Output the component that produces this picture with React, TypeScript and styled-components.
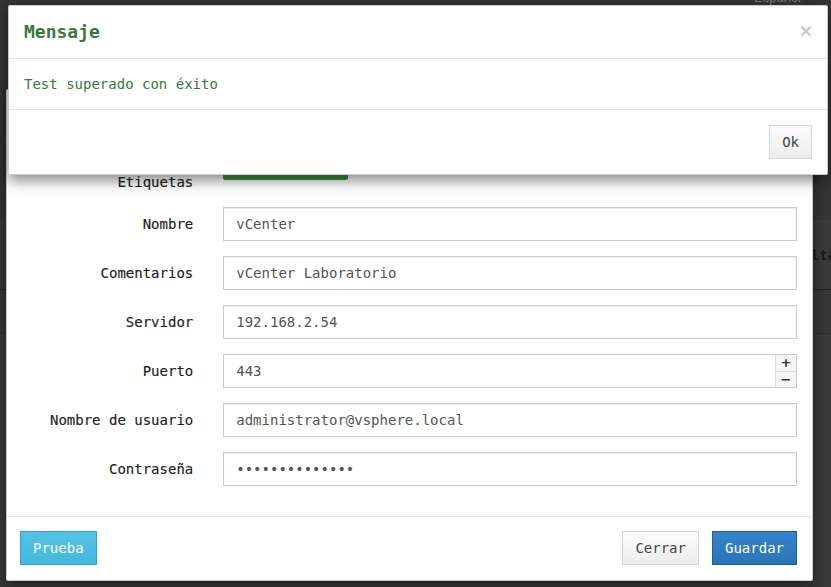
import React from "react";
import styled, { createGlobalStyle } from "styled-components";

const Global = createGlobalStyle`
  html, body { margin: 0; padding: 0; background: #383838; }
  body { font-family: "DejaVu Sans Mono", "Liberation Mono", monospace; font-size: 14px; }
  * { box-sizing: border-box; }
`;

const Page = styled.div`
  position: relative;
  width: 831px;
  height: 587px;
  overflow: hidden;
  background: #383838;
`;

/* underlying dimmed page */
const Underlay = styled.div`
  display: flex;
  flex-direction: column;
  width: 100%;
`;

const UnderRow = styled.div<{ $h: number; $bg: string; $line?: string }>`
  height: ${(p) => p.$h}px;
  background: ${(p) => p.$bg};
  border-bottom: 1px solid ${(p) => p.$line || "transparent"};
  display: flex;
  align-items: center;
  padding-left: 777px;
  color: #1c1c1c;
  font-weight: bold;
  font-size: 14px;
  white-space: nowrap;
`;

const TopNav = styled.div`
  height: 175px;
  background: #353535;
  display: flex;
  justify-content: flex-end;
  align-items: flex-start;
  padding-right: 30px;
  color: #7a7a7a;
  font-family: "Liberation Sans", Arial, sans-serif;
  font-size: 13px;
  line-height: 14px;
`;

const NavText = styled.span`
  margin-top: -9px;
`;

/* modals */
const ModalBox = styled.div<{ $left: number; $top: number; $width: number }>`
  position: absolute;
  left: ${(p) => p.$left}px;
  top: ${(p) => p.$top}px;
  width: ${(p) => p.$width}px;
  background: #fff;
  border: 1px solid rgba(0, 0, 0, 0.2);
  border-radius: 2px;
  box-shadow: 0 5px 15px rgba(0, 0, 0, 0.5);
`;

const Header = styled.div`
  display: flex;
  justify-content: space-between;
  align-items: flex-start;
  padding: 15px;
  border-bottom: 1px solid #e5e5e5;
`;

const Title = styled.h4<{ $color?: string }>`
  margin: 0;
  font-size: 18px;
  line-height: 22px;
  font-weight: bold;
  color: ${(p) => p.$color || "#333"};
`;

const Close = styled.button`
  border: 0;
  background: transparent;
  padding: 0;
  margin-top: -1px;
  font-family: "Liberation Sans", Arial, sans-serif;
  font-size: 21px;
  font-weight: bold;
  line-height: 1;
  color: #000;
  opacity: 0.2;
`;

const Body = styled.div`
  padding: 15px;
`;

const Message = styled.p`
  margin: 0;
  line-height: 20px;
  color: #3c763d;
`;

const Footer = styled.div`
  display: flex;
  align-items: center;
  justify-content: flex-end;
  gap: 13px;
  padding: 15px;
  border-top: 1px solid #e5e5e5;
`;

const FormFooter = styled(Footer)`
  padding: 14px 15px 15px 13px;
`;

const Spacer = styled.div`
  flex: 1;
`;

const Btn = styled.button<{ $variant?: "default" | "primary" | "info" }>`
  height: 34px;
  padding: 6px 12px;
  font-family: "DejaVu Sans Mono", monospace;
  font-size: 14px;
  line-height: 20px;
  border-radius: 0;
  border: 1px solid
    ${(p) =>
      p.$variant === "primary" ? "#215e93" : p.$variant === "info" ? "#3a9be0" : "#d5d5d5"};
  background: ${(p) =>
    p.$variant === "primary"
      ? "linear-gradient(#3483c8, #2b74b7)"
      : p.$variant === "info"
      ? "linear-gradient(#54c2e5, #45b8de)"
      : "linear-gradient(#fbfbfb, #ededed)"};
  color: ${(p) => (p.$variant === "primary" || p.$variant === "info" ? "#fff" : "#444")};
`;

const FormBody = styled.div`
  padding: 15px 0;
`;

const Row = styled.div`
  display: grid;
  grid-template-columns: 3fr 9fr;
  margin-bottom: 15px;
  min-height: 34px;
`;

const Label = styled.label<{ $pad?: number }>`
  padding: ${(p) => p.$pad ?? 7}px 15px 0;
  text-align: right;
  font-weight: normal;
  color: #222;
  -webkit-text-stroke: 0.15px #222;
  line-height: 20px;
`;

const Field = styled.div`
  padding: 0 15px;
`;

const Input = styled.input`
  display: block;
  width: 100%;
  height: 34px;
  padding: 6px 12px;
  border: 1px solid #ccc;
  border-radius: 0;
  box-shadow: inset 0 1px 1px rgba(0, 0, 0, 0.075);
  font-family: "DejaVu Sans Mono", monospace;
  font-size: 14px;
  line-height: 20px;
  color: #555;
  background: #fff;
  outline: none;
`;

const SpinWrap = styled.div`
  display: flex;
  height: 34px;
  border: 1px solid #ccc;
  box-shadow: inset 0 1px 1px rgba(0, 0, 0, 0.075);
`;

const SpinInput = styled(Input)`
  flex: 1;
  height: 32px;
  border: 0;
  box-shadow: none;
`;

const SpinCol = styled.div`
  width: 21px;
  display: flex;
  flex-direction: column;
  border-left: 1px solid #ddd;
`;

const SpinBtn = styled.div<{ $top?: boolean }>`
  flex: 1;
  display: flex;
  align-items: center;
  justify-content: center;
  background: #f5f5f5;
  border-bottom: ${(p) => (p.$top ? "1px solid #ddd" : "0")};
  font-family: "DejaVu Sans", sans-serif;
  font-weight: bold;
  font-size: 13px;
  line-height: 1;
  color: #333;
`;

const Tag = styled.span`
  display: inline-block;
  height: 22px;
  padding: 3px 3px;
  background: #3f8f3f;
  border-radius: 2px;
  color: #bfe3bf;
  font-size: 11px;
  line-height: 16px;
`;

const fields: { label: string; value: string; type?: string }[] = [
  { label: "Nombre", value: "vCenter" },
  { label: "Comentarios", value: "vCenter Laboratorio" },
  { label: "Servidor", value: "192.168.2.54" },
];

const fields2: { label: string; value: string; type?: string }[] = [
  { label: "Nombre de usuario", value: "administrator@vsphere.local" },
  { label: "Contraseña", value: "vmware12345678", type: "password" },
];

export default function App() {
  return (
    <>
      <Global />
      <Page>
        <Underlay>
          <TopNav>
            <NavText>▪ Español</NavText>
          </TopNav>
          <UnderRow $h={45} $bg="#363636" />
          <UnderRow $h={70} $bg="#3b3b3b" $line="#262626">
            Resultado
          </UnderRow>
          <UnderRow $h={44} $bg="#383838" $line="#2e2e2e" />
          <UnderRow $h={252} $bg="#3a3a3a" />
        </Underlay>

        <ModalBox $left={6} $top={89} $width={807}>
          <Header>
            <Title>Editar conector</Title>
            <Close>×</Close>
          </Header>
          <FormBody>
            <Row>
              <Label $pad={14}>Etiquetas</Label>
              <Field>
                <Tag>Añadir etiqueta...</Tag>
              </Field>
            </Row>
            {fields.map((f) => (
              <Row key={f.label}>
                <Label>{f.label}</Label>
                <Field>
                  <Input type={f.type || "text"} defaultValue={f.value} readOnly />
                </Field>
              </Row>
            ))}
            <Row>
              <Label>Puerto</Label>
              <Field>
                <SpinWrap>
                  <SpinInput type="text" defaultValue="443" readOnly />
                  <SpinCol>
                    <SpinBtn $top>+</SpinBtn>
                    <SpinBtn>−</SpinBtn>
                  </SpinCol>
                </SpinWrap>
              </Field>
            </Row>
            {fields2.map((f) => (
              <Row key={f.label}>
                <Label>{f.label}</Label>
                <Field>
                  <Input type={f.type || "text"} defaultValue={f.value} readOnly />
                </Field>
              </Row>
            ))}
          </FormBody>
          <FormFooter>
            <Btn $variant="info">Prueba</Btn>
            <Spacer />
            <Btn>Cerrar</Btn>
            <Btn $variant="primary">Guardar</Btn>
          </FormFooter>
        </ModalBox>

        <ModalBox $left={8} $top={5} $width={820}>
          <Header>
            <Title $color="#3c763d">Mensaje</Title>
            <Close>×</Close>
          </Header>
          <Body>
            <Message>Test superado con éxito</Message>
          </Body>
          <Footer>
            <Btn>Ok</Btn>
          </Footer>
        </ModalBox>
      </Page>
    </>
  );
}
